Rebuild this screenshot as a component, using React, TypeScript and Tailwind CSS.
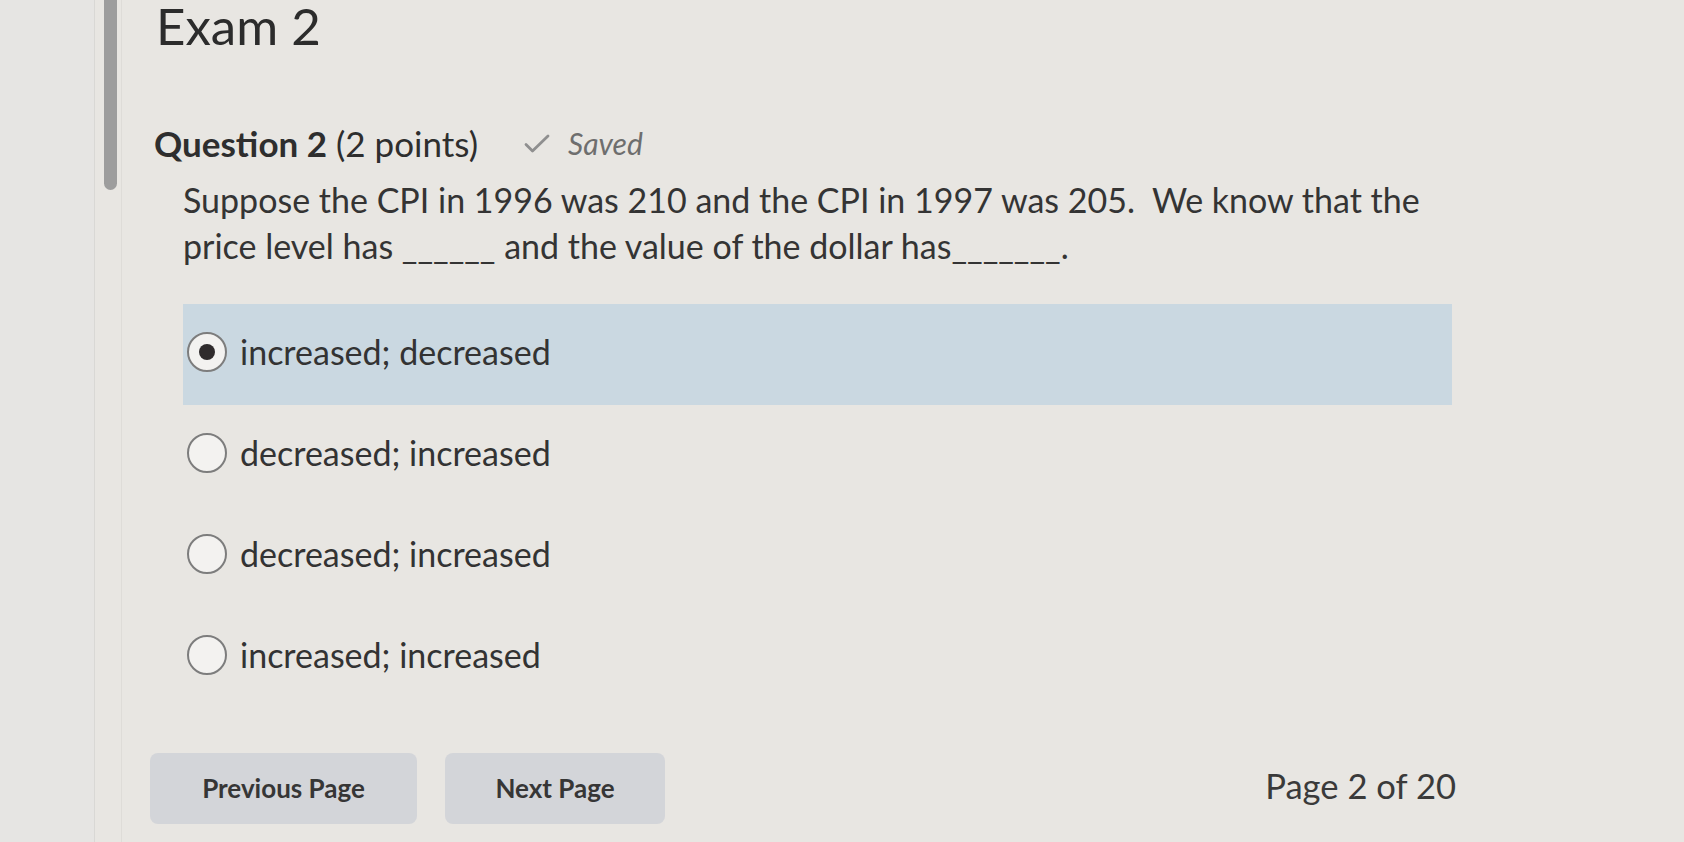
import React from "react";

function Radio({ checked }: { checked: boolean }) {
  return (
    <div className="flex h-[40px] w-[40px] shrink-0 items-center justify-center rounded-full border-2 border-[#7d7d7d] bg-[#f3f2f0]">
      {checked && <div className="h-[16px] w-[16px] rounded-full bg-[#2f2b2c]" />}
    </div>
  );
}

function Option({ label, checked }: { label: string; checked?: boolean }) {
  return (
    <div
      className={
        "flex h-[101px] items-center gap-[13px] pb-[6px] pl-[4px] " +
        (checked ? "bg-[#cad8e1]" : "")
      }
    >
      <Radio checked={!!checked} />
      <span className="text-[34px] leading-[42px] text-[#333333]">{label}</span>
    </div>
  );
}

export default function App() {
  return (
    <div
      className="flex h-[842px] w-full overflow-hidden bg-[#e8e6e2]"
      style={{ fontFamily: "Lato, 'Noto Sans', sans-serif" }}
    >
      <div className="h-full w-[95px] shrink-0 border-r border-[#d9d8d5] bg-[#e6e5e3]" />
      <div className="h-full w-[27px] shrink-0 border-r border-[#dedcd8]">
        <div className="ml-[9px] h-[190px] w-[13px] rounded-b-full bg-[#9d9d9d]" />
      </div>
      <div className="flex w-[1340px] flex-col pl-[34px]">
        <h1 className="h-[60px] text-[51px] leading-[51px] font-normal text-[#2c2c2c]">Exam 2</h1>
        <div className="mt-[66px] flex h-[34px] items-center">
          <span className="-ml-[2px] text-[35px] leading-[34px] text-[#2e2e2e]">
            <span className="font-bold">Question 2</span> (2 points)
          </span>
          <span className="ml-[45px] flex items-center gap-[17px] text-[#6e6e6e]">
            <svg width="28" height="23" viewBox="0 0 28 23" fill="none">
              <path d="M3 12.5 L9.5 19 L25 4" stroke="#8f8f8f" strokeWidth="2.8" strokeLinecap="round" strokeLinejoin="round" />
            </svg>
            <span className="text-[30px] italic leading-[34px]">Saved</span>
          </span>
        </div>
        <p className="ml-[27px] mt-[17px] whitespace-nowrap text-[34px] leading-[46px] text-[#343434]">
          Suppose the CPI in 1996 was 210 and the CPI in 1997 was 205.&nbsp; We know that the
          <br />
          price level has ______ and the value of the dollar has_______.
        </p>
        <div className="ml-[27px] mt-[35px] flex w-[1269px] flex-col">
          <Option label="increased; decreased" checked />
          <Option label="decreased; increased" />
          <Option label="decreased; increased" />
          <Option label="increased; increased" />
        </div>
        <div className="-ml-[6px] mt-[45px] flex w-[1306px] items-center">
          <button className="h-[71px] w-[267px] rounded-[8px] bg-[#d3d5d9] text-[26px] font-bold text-[#363636]">
            Previous Page
          </button>
          <button className="ml-[28px] h-[71px] w-[220px] rounded-[8px] bg-[#d3d5d9] text-[26px] font-bold text-[#363636]">
            Next Page
          </button>
          <span className="ml-auto -mt-[6px] text-[34.6px] leading-[40px] text-[#3a3a3a]">Page 2 of 20</span>
        </div>
      </div>
    </div>
  );
}
